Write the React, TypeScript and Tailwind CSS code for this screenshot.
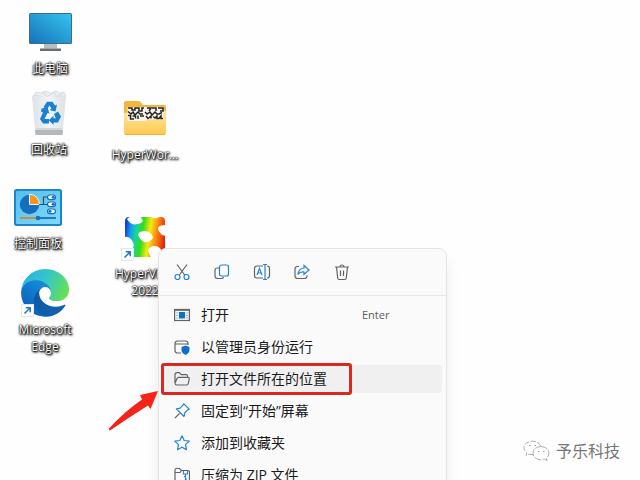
import type { ReactNode } from 'react';

function ShortcutBadge() {
  return (
    <svg className="absolute bottom-0 left-0" width="13" height="13" viewBox="0 0 13 13" fill="none">
      <rect x=".5" y=".5" width="12" height="12" fill="#fff" stroke="#e3e6ea" />
      <path d="M3.5 9.5 8.8 4.2M4.8 3.8h4.4v4.4" stroke="#2079c4" strokeWidth="1.5" />
    </svg>
  );
}

function PcIcon() {
  return (
    <svg width="43" height="38" viewBox="0 0 43 38">
      <defs>
        <linearGradient id="pc" x1="1" y1="0" x2="0" y2="1">
          <stop offset="0" stopColor="#35c3ee" />
          <stop offset="1" stopColor="#1673b9" />
        </linearGradient>
      </defs>
      <path d="M15 31h13v4.500H15z" fill="#b9bec3" />
      <path d="M11 35.500h21V38H11z" fill="#686d72" />
      <rect width="43" height="31" rx="1.500" fill="#3c6d86" />
      <rect x="1" y="1" width="41" height="29" rx=".6" fill="url(#pc)" />
    </svg>
  );
}

function RecycleBinIcon() {
  return (
    <svg width="36" height="46" viewBox="0 0 36 46">
      <defs>
        <linearGradient id="bin" x1="0" y1="0" x2="1" y2="0">
          <stop offset="0" stopColor="#dde2e6" />
          <stop offset=".5" stopColor="#f3f5f7" />
          <stop offset="1" stopColor="#dde2e6" />
        </linearGradient>
      </defs>
      <path d="M2 6 5 2l5 1 4-2 6 2 5-2 4 2 4-1 2 4-3 3H4z" fill="#eceff1" stroke="#d3d7da" strokeWidth=".7" />
      <path d="m12 2 4 5 7-5 3 5 6-4M3 5l9 2M22 7l12-1" fill="none" stroke="#d0d4d7" strokeWidth=".8" />
      <path d="M1 6.500h34L31.500 44h-27z" fill="url(#bin)" />
      <path d="M4 40h28l-.5 5h-27z" fill="#b3b8bd" />
      <path d="m4 40 2-2h24l2 2z" fill="#d4d8dc" />
      <g fill="#1a80d3">
        <path d="m12.500 17 3.500-5.200h5.500l2.500 3.700 2-1-1.500 7-6-1.500 2-1.500-2-3-2.500 4z" />
        <path d="m10.500 18.500 6-1 2 6-2-.4-3 5.900h4.500v4.500h-6l-3-4.500 3-6.500-2-1z" />
        <path d="m23 24 4-2.600 3 5-3 6.100h-4.500v2.400l-4.700-4.700 4.700-4.400v2.400h2.300z" />
      </g>
    </svg>
  );
}

function ControlPanelIcon() {
  return (
    <svg width="48" height="37" viewBox="0 0 48 37">
      <defs>
        <linearGradient id="cp" x1="0" y1="0" x2="1" y2="1">
          <stop offset="0" stopColor="#55c0ee" />
          <stop offset="1" stopColor="#80d8fa" />
        </linearGradient>
      </defs>
      <rect width="48" height="37" rx="2.500" fill="#1c86c9" />
      <rect x="2" y="2" width="44" height="33" rx="1" fill="url(#cp)" />
      <circle cx="15.500" cy="15.500" r="9.700" fill="#1470bd" />
      <path d="M15.500 15.500V5.200A10 10 0 0 1 25.500 15.500z" fill="#f7941d" stroke="#e6f6fd" strokeWidth="1" />
      <path d="M25 15.500h4.500V8H34M29.500 15.500H34" fill="none" stroke="#19557f" strokeWidth="1.200" />
      <g stroke="#1470bd" strokeWidth="1.200" fill="#fff">
        <rect x="33.500" y="6" width="8" height="4.600" rx="2.300" />
        <rect x="33.500" y="13" width="8" height="4.600" rx="2.300" />
        <rect x="33.500" y="20" width="8" height="4.600" rx="2.300" />
      </g>
      <g fill="#1470bd">
        <circle cx="39.200" cy="8.300" r="1.500" />
        <circle cx="39.200" cy="15.300" r="1.500" />
        <circle cx="36" cy="22.300" r="1.500" />
      </g>
      <path d="M6 29h17" stroke="#c98f35" strokeWidth="2" />
      <path d="M24 29h18" stroke="#1470bd" strokeWidth="1.800" />
      <circle cx="24" cy="29" r="2.300" fill="#1470bd" />
    </svg>
  );
}

function EdgeIcon() {
  return (
    <svg width="48" height="48" viewBox="0 0 256 256">
      <defs>
        <linearGradient id="edgeA" x1="0" y1="0" x2="1" y2="0">
          <stop offset="0" stopColor="#0c59a4" />
          <stop offset="1" stopColor="#1463b4" />
        </linearGradient>
        <linearGradient id="edgeB" x1="1" y1="0" x2=".3" y2="1">
          <stop offset="0" stopColor="#1b9de2" />
          <stop offset=".3" stopColor="#1287d8" />
          <stop offset="1" stopColor="#0d5fb5" />
        </linearGradient>
        <linearGradient id="edgeC" x1="0" y1=".3" x2="1" y2=".6">
          <stop offset="0" stopColor="#2fb0e6" />
          <stop offset=".5" stopColor="#36c7c8" />
          <stop offset="1" stopColor="#66e04f" />
        </linearGradient>
      </defs>
      <path fill="url(#edgeA)" d="M231 190.500c-3.400 1.800-6.900 3.400-10.500 4.700a101.300 101.300 0 0 1-35.600 6.300c-47 0-88-32.300-88-73.800.1-11.300 6.300-21.700 16.100-27.200-42.500 1.800-53.400 46.100-53.400 72 0 73.400 67.600 80.800 82.200 80.800 7.900 0 19.700-2.300 26.800-4.500l1.300-.4a128.300 128.300 0 0 0 66.600-52.800 4 4 0 0 0-5.500-5.100z" />
      <path fill="url(#edgeB)" d="M105.700 241.500a79.200 79.200 0 0 1-22.700-21.300 80.700 80.700 0 0 1 29.900-119.900c3.200-1.500 8.500-4.100 15.600-4a32.400 32.400 0 0 1 25.700 13 31.900 31.900 0 0 1 6.300 18.700c0-.2 24.500-79.600-80-79.600-43.900 0-80 41.700-80 78.200 0 18.800 4 37.500 12.400 54.400a127.900 127.900 0 0 0 156.300 67.200 75.500 75.500 0 0 1-63.400-6.600z" />
      <path fill="url(#edgeC)" d="M152.500 149.300c-.8 1-3.300 2.500-3.300 5.700 0 2.600 1.700 5.200 4.800 7.300 14.400 10.100 41.600 8.700 41.700 8.700a59.800 59.800 0 0 0 30.400-8.400A61.700 61.700 0 0 0 256 109.400c.3-22.400-8-37.300-11.300-43.900C224 24 178 0 128 0A128 128 0 0 0 0 126.200c.5-36.500 36.800-66 80-66 3.500 0 23.500.3 42 10a72.600 72.600 0 0 1 30.900 29.300c6.200 10.700 7.200 24.100 7.200 29.400s-2.700 13.300-7.600 20.400z" />
    </svg>
  );
}

function FolderIcon() {
  return (
    <svg width="44" height="36" viewBox="0 0 44 36">
      <defs>
        <linearGradient id="folder" x1="0" y1="0" x2="0" y2="1">
          <stop offset="0" stopColor="#ffe79a" />
          <stop offset="1" stopColor="#fcc94f" />
        </linearGradient>
      </defs>
      <path d="M1 2.500A2 2 0 0 1 3 1h12q1.500 0 2.500 1L20 5h21a2 2 0 0 1 2 2v14H1z" fill="#f3b53c" />
      <path d="M1 14q0-1.500 2-1.500h13l4-2h21q2 0 2 2V33a2 2 0 0 1-2 2H3a2 2 0 0 1-2-2z" fill="url(#folder)" />
      <path d="M2 34.500h40" stroke="#efb236" />
      <path d="M4.500 7h36v12.500H25l-3 1.500H4.500z" fill="#f6f4ee" />
      <g fill="none" stroke="#26241f" strokeWidth="1.500">
        <path d="M5 8h4v2h3V8h4v3h3V8h2M24 8h4l-2 3M29 8h4v3M35 8h5v3h-3" />
        <path d="M5 11.500 8 14l2-2 2 3 3-3 2 2h3M22 12l2 2 3-2 2 3 3-3 2 2h2l3-1.500" />
        <path d="M5 15.500h2.500V19H11M9.500 16h3v2.500M15 15.500v3.500M17 16h4M23 16l2 2.500 3-2.500v2.500M30 16.500l2 1.500 2-2v2.500h2l2-2.500v2.500h2" />
      </g>
    </svg>
  );
}

function HyperViewIcon() {
  return (
    <svg width="42" height="42" viewBox="0 0 42 42">
      <defs>
        <linearGradient id="hv" x1="0" y1=".4" x2="1" y2=".55">
          <stop offset="0" stopColor="#1743d0" />
          <stop offset=".13" stopColor="#13a0ee" />
          <stop offset=".27" stopColor="#14d79a" />
          <stop offset=".42" stopColor="#35dc16" />
          <stop offset=".6" stopColor="#f4ec10" />
          <stop offset=".77" stopColor="#fb8c12" />
          <stop offset="1" stopColor="#e5200e" />
        </linearGradient>
      </defs>
      <rect x="1" y="1" width="40" height="40" rx="4" fill="url(#hv)" />
      <g fill="#fff">
        <path d="M3 3q3-3 6-3h7q2 3 3 5-2 3-6 3-6 2-10-5z" />
        <path d="M26 0h12l-5 2q-4 1-7-2z" />
        <path d="M14 18q2-3 6-3 5 0 8 4 2 3-1 5-3 3-7 2-3-1-5-5-1-2-1-3z" />
        <path d="M42 9v11l-4-1q-4-4-4-7 1-3 8-3z" />
        <path d="M0 21q4-1 7 2 4 5 2 9l-9 2z" />
        <path d="M24 34q2-4 7-4 4 0 6 4v8H28q-3-3-4-8z" />
      </g>
    </svg>
  );
}

type DesktopItem = {
  label: string;
  icon: ReactNode;
  place: string;
  shortcut?: boolean;
};

const desktopItems: DesktopItem[] = [
  { label: '此电脑', icon: <PcIcon />, place: 'left-2.5 top-2' },
  { label: '回收站', icon: <RecycleBinIcon />, place: 'left-[9px] top-[89px]' },
  { label: '控制面板', icon: <ControlPanelIcon />, place: '-left-0.5 top-[183px]' },
  { label: 'Microsoft Edge', icon: <EdgeIcon />, place: 'left-[5px] top-[269px]', shortcut: true },
  { label: 'HyperWor...', icon: <FolderIcon />, place: 'left-[105px] top-[94px]' },
  { label: 'HyperView 2022', icon: <HyperViewIcon />, place: 'left-[105px] top-[213px]', shortcut: true },
];

function DesktopShortcut({ label, icon, place, shortcut }: DesktopItem) {
  return (
    <button className={`absolute flex w-20 flex-col items-center gap-1 ${place}`}>
      <span className="relative flex h-12 w-12 items-center justify-center">
        {icon}
        {shortcut && <ShortcutBadge />}
      </span>
      <span className="w-18 text-center text-[12px] leading-[17px] text-white [text-shadow:0_0_1px_#000,0_0_2px_#000,1px_1px_2px_#000,1px_1px_3px_#000]">
        {label}
      </span>
    </button>
  );
}

const GRAY = '#5f6368';
const BLUE = '#2583cf';

const quickActions = [
  {
    name: '剪切',
    icon: (
      <>
        <path d="M4 1.500 11.700 12M14 1.500 6.300 12" stroke={GRAY} />
        <circle cx="4.500" cy="14" r="2.500" stroke={BLUE} />
        <circle cx="13.500" cy="14" r="2.500" stroke={BLUE} />
      </>
    ),
  },
  {
    name: '复制',
    icon: (
      <>
        <path d="M6 5H4a2 2 0 0 0-2 2v6a2.500 2.500 0 0 0 2.500 2.500h4A2 2 0 0 0 10.500 14" stroke={GRAY} />
        <rect x="6.500" y="2" width="9" height="11" rx="2" stroke={BLUE} />
      </>
    ),
  },
  {
    name: '重命名',
    icon: (
      <>
        <path d="M10 3H4a2.500 2.500 0 0 0-2.500 2.500v7A2.500 2.500 0 0 0 4 15h6M14 3a2.500 2.500 0 0 1 2.500 2.500v7A2.500 2.500 0 0 1 14 15" stroke={GRAY} />
        <path d="M10 1.500h4M12 1.500v15M10 16.500h4M4 12l2.500-6.500L9 12M5 10h3" stroke={BLUE} />
      </>
    ),
  },
  {
    name: '共享',
    icon: (
      <>
        <path d="M6 3.500H4.500A2.500 2.500 0 0 0 2 6v7a2.500 2.500 0 0 0 2.500 2.500h7A2.500 2.500 0 0 0 14 13v-.5" stroke={GRAY} />
        <path d="M11 2.500 16 7l-5 4.500V9Q7 8.500 5 11.500 5.500 5.500 11 5z" stroke={BLUE} />
      </>
    ),
  },
  {
    name: '删除',
    icon: (
      <path d="M2 4h14M3.500 4l1.200 11q.1 1.500 1.600 1.500h5.400q1.500 0 1.600-1.500L14.500 4M7 4a2 2 0 0 1 4 0M7.500 7.500v5.500M10.500 7.500v5.500" stroke={GRAY} />
    ),
  },
];

const menuItems = [
  {
    label: '打开',
    hint: 'Enter',
    icon: (
      <>
        <rect x=".6" y="2.500" width="14.800" height="11" stroke={GRAY} />
        <path d="M5.500 5.500h5V11h-5z" fill="#1273bd" stroke="#1273bd" />
        <path d="M1 3.500h14" stroke={GRAY} strokeWidth=".8" />
        <path d="M2.500 6h1M2.500 8.500h1M2.500 11h1M12.500 6h1M12.500 8.500h1M12.500 11h1" stroke={BLUE} />
      </>
    ),
  },
  {
    label: '以管理员身份运行',
    icon: (
      <>
        <path d="M7 14H3.500A2.500 2.500 0 0 1 1 11.500v-7A2.500 2.500 0 0 1 3.500 2h8A2.500 2.500 0 0 1 14 4.500V6M1 5h13" stroke={GRAY} />
        <path d="m11.500 6.500 4 1.500v3q0 3-4 5-4-2-4-5V8z" fill="#0f6fc8" />
      </>
    ),
  },
  {
    label: '打开文件所在的位置',
    marked: true,
    icon: (
      <path d="M1 12.500V3.500a1.800 1.800 0 0 1 1.800-1.800h2.500l2 2H12a1.600 1.600 0 0 1 1.600 1.600v1M1 12.200 3 7.500a2 2 0 0 1 1.800-1.200h9.200a1.200 1.200 0 0 1 1.200 1.500l-.9 4.700a1.800 1.800 0 0 1-1.800 1.500H2.800A1.800 1.800 0 0 1 1 12.200" stroke={GRAY} />
    ),
  },
  {
    label: '固定到“开始”屏幕',
    icon: (
      <>
        <path d="M5.500 10.500.8 15.200" stroke={GRAY} />
        <path d="m9.800.8 5.400 5.400-1.500.7-2.900 2.800-.8 3.800L2.400 5.900l3.700-.8L9 2.200z" stroke={BLUE} strokeLinejoin="round" />
      </>
    ),
  },
  {
    label: '添加到收藏夹',
    icon: (
      <path d="m8 .8 2.200 4.700 5.100.6-3.800 3.500 1 5.100L8 12.200l-4.500 2.500 1-5.100L.7 6.100l5.100-.6z" stroke={BLUE} strokeLinejoin="round" />
    ),
  },
  {
    label: '压缩为 ZIP 文件',
    icon: (
      <>
        <path d="M8 14.500H2.500A1.500 1.500 0 0 1 1 13V3a1.500 1.500 0 0 1 1.500-1.500h3L7.500 3.500H14A1.500 1.500 0 0 1 15.500 5v8a1.500 1.500 0 0 1-1.500 1.500M1 5.500h5l1.500-2" stroke={GRAY} />
        <path d="M9.500 4v3h4V4M11.500 7v8M10 9.500h1.500M11.500 12H13" stroke={BLUE} />
      </>
    ),
  },
];

function ContextMenu() {
  return (
    <div
      role="menu"
      className="absolute left-[158px] top-[248px] w-[289px] rounded-lg border border-[#e4e4e4] bg-[#fafafa] pb-2 shadow-[0_12px_14px_rgba(0,0,0,0.08)]"
    >
      <div className="flex h-[47px] items-center border-b border-[#e6e6e6] px-[3px]">
        {quickActions.map((action) => (
          <button key={action.name} aria-label={action.name} className="flex h-8 w-10 items-center justify-center">
            <svg width="18" height="18" viewBox="0 0 18 18" fill="none" strokeWidth="1.200">
              {action.icon}
            </svg>
          </button>
        ))}
      </div>
      <ul className="flex flex-col gap-1 px-1 pt-[5px]">
        {menuItems.map((item) => (
          <li key={item.label} className="relative">
            <button
              role="menuitem"
              className={`flex h-7 w-full items-center gap-[11px] rounded pl-[11px] text-left text-[14px] text-[#1b1b1b] ${
                item.marked ? 'bg-[#f0f0f0]' : ''
              }`}
            >
              <svg className="shrink-0" width="16" height="16" viewBox="0 0 16 16" fill="none" strokeWidth="1.200">
                {item.icon}
              </svg>
              <span className="flex-1 leading-5">{item.label}</span>
              {item.hint && <span className="w-20 text-[11px] text-[#5c5c5c]">{item.hint}</span>}
            </button>
            {/* red callout around the highlighted entry */}
            {item.marked && (
              <span className="pointer-events-none absolute -left-0.5 -top-0.5 h-8 w-[191px] rounded-[3px] border-3 border-[#d8281f]" />
            )}
          </li>
        ))}
      </ul>
    </div>
  );
}

function Watermark() {
  return (
    <div className="absolute bottom-[17px] right-5 flex items-center gap-1.5 text-[#777]">
      <svg width="27" height="22" viewBox="0 0 27 22" fill="none" stroke="#9b9b9b" strokeWidth=".8">
        <path d="M10 14.500q-2 .3-4-.5l-3 1.500.8-2.700Q1 10.500 1 7.500 1.500 2 9 1.200q7 0 8.500 5" strokeDasharray="5 1.500" />
        <path d="M18 6.500q7.500.5 8 6.500 0 3-2.500 5l.5 2.500-2.500-1.200q-2 .6-4 .5-7.300-.8-7.500-6.800.5-6 8-6.500z" strokeDasharray="7 1.500" />
        <path d="M6 5.500h1.500M11.500 5.500H13M15 11.500h1.500M20 11.500h1.500" strokeWidth="1.200" />
      </svg>
      <span className="text-[16px] leading-6">予乐科技</span>
    </div>
  );
}

export default function App() {
  return (
    <main className="relative h-screen overflow-hidden bg-[#fefefe] font-['Open_Sans','Noto_Sans_CJK_SC',sans-serif]">
      {desktopItems.map((item) => (
        <DesktopShortcut key={item.label} {...item} />
      ))}

      <ContextMenu />

      <svg className="absolute left-[108px] top-[391px]" width="51" height="41" viewBox="0 0 51 41">
        <path d="M50 0 32 4l2 4.500Q16 21 1 37.500V39l1 .5Q20 27 40 14.500l2.500 3.500z" fill="#f5241b" />
      </svg>

      <Watermark />
    </main>
  );
}
